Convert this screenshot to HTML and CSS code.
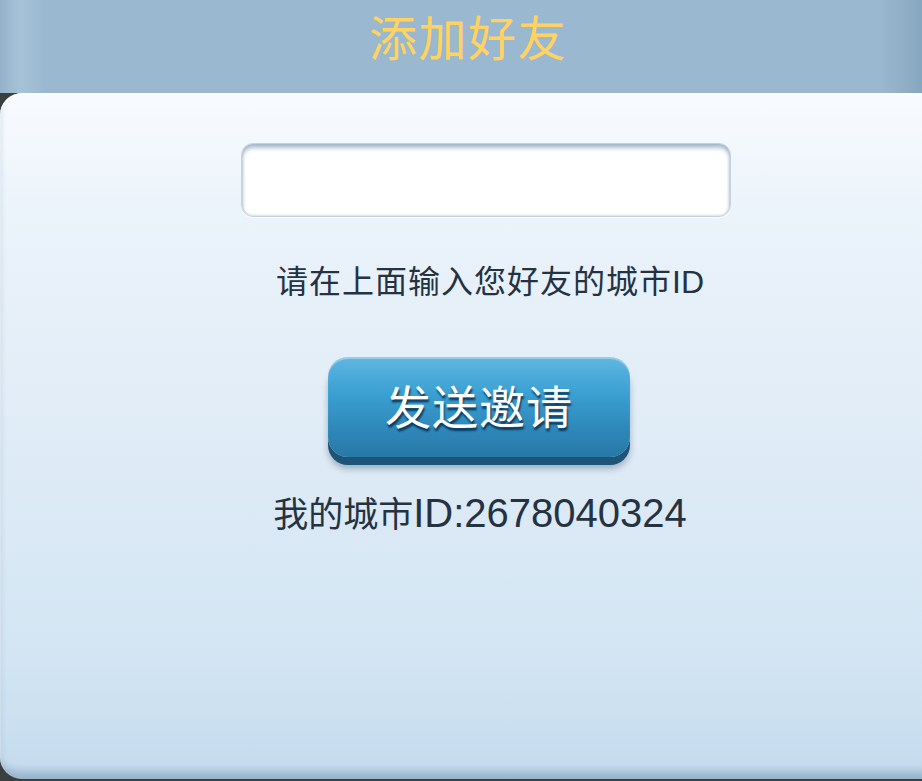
FILE: index.html
```html
<!DOCTYPE html>
<html lang="zh-CN">
<head>
<meta charset="utf-8">
<title>添加好友</title>
<link rel="stylesheet" href="styles.css">
</head>
<body>
<div class="screen">
  <header class="header">
    <h1 class="title">添加好友</h1>
  </header>
  <main class="panel">
    <div class="field"><input class="id-input" type="text" aria-label="城市ID"></div>
    <p class="hint">请在上面输入您好友的城市<span class="latin">ID</span></p>
    <button class="send-btn" type="button">发送邀请</button>
    <p class="my-id">我的城市<span class="latin-lg">ID:2678040324</span></p>
  </main>
</div>
</body>
</html>
```

FILE: styles.css
```css
html, body {
  margin: 0;
  padding: 0;
}
body {
  width: 922px;
  height: 781px;
  overflow: hidden;
  background: #3a3f3f;
  font-family: "Liberation Sans", "Noto Sans CJK SC", sans-serif;
}
.screen {
  width: 922px;
  height: 781px;
  display: flex;
  flex-direction: column;
  overflow: hidden;
  background: linear-gradient(#9bb8cf, #9bb8cf 90px, #3a3f3f 90px);
}
.header {
  height: 93px;
  flex: none;
  background: linear-gradient(90deg, #93b1c9 0px, #a6c3d8 20px, #9ab8cf 45px, #9ab8cf 880px, #90afc7 905px, #86a5be 922px);
  display: flex;
  justify-content: center;
  align-items: flex-start;
  padding: 0 0 0 14px;
  box-sizing: border-box;
}
.title {
  margin: 0;
  font-family: "Noto Sans CJK SC", sans-serif;
  font-weight: 400;
  font-size: 48px;
  line-height: normal;
  color: #ffd262;
  letter-spacing: 1.5px;
}
.panel {
  width: 972px;
  height: 686px;
  flex: none;
  box-sizing: border-box;
  border-radius: 22px;
  background: linear-gradient(#f8fbfe 0px, #ebf3fb 120px, #e2edf7 300px, #d3e5f3 560px, #c6dcee 670px, #a9c4da 686px);
  box-shadow: inset 0 2px 2px rgba(255,255,255,0.9), inset 0 -6px 6px rgba(120,150,180,0.35);
  display: flex;
  flex-direction: column;
  align-items: center;
}
.field {
  margin-top: 50px;
  width: 490px;
  height: 74px;
  border-radius: 12px;
  background: #fff;
  box-shadow: inset 0 4px 4px rgba(110,140,170,0.55), inset 0 0 3px rgba(110,140,170,0.5), 0 1px 1px rgba(255,255,255,0.9);
  border: 1px solid #c2d2df;
  box-sizing: border-box;
}
.id-input {
  width: 100%;
  height: 100%;
  border: 0;
  background: transparent;
  outline: none;
}
.hint {
  margin: 42px 0 0 8px;
  font-family: "Noto Sans CJK SC", sans-serif;
  font-size: 32px;
  line-height: 40px;
  color: #243241;
  letter-spacing: 1px;
}
.latin {
  font-family: "Liberation Sans", sans-serif;
  font-size: 32px;
  letter-spacing: 0;
}
.send-btn {
  margin: 55px 14px 0 0;
  width: 302px;
  height: 100px;
  border: 0;
  border-radius: 20px;
  background: linear-gradient(#62b6e0 0%, #3ba1d3 35%, #2d86b8 75%, #2878a6 100%);
  box-shadow: inset 0 2px 1px rgba(255,255,255,0.35), 0 8px 0 #1c5577, 0 12px 6px rgba(40,70,100,0.35);
  color: #fff;
  font-family: "Noto Sans CJK SC", sans-serif;
  font-size: 46px;
  line-height: 50px;
  padding: 0 0 6px;
  text-shadow: 1px 3px 2px rgba(0,30,60,0.75);
  letter-spacing: 1px;
}
.my-id {
  margin: 33px 12px 0 0;
  font-family: "Noto Sans CJK SC", sans-serif;
  font-size: 35px;
  line-height: 44px;
  color: #243241;
}
.latin-lg {
  font-family: "Liberation Sans", sans-serif;
  font-size: 40px;
}
```
